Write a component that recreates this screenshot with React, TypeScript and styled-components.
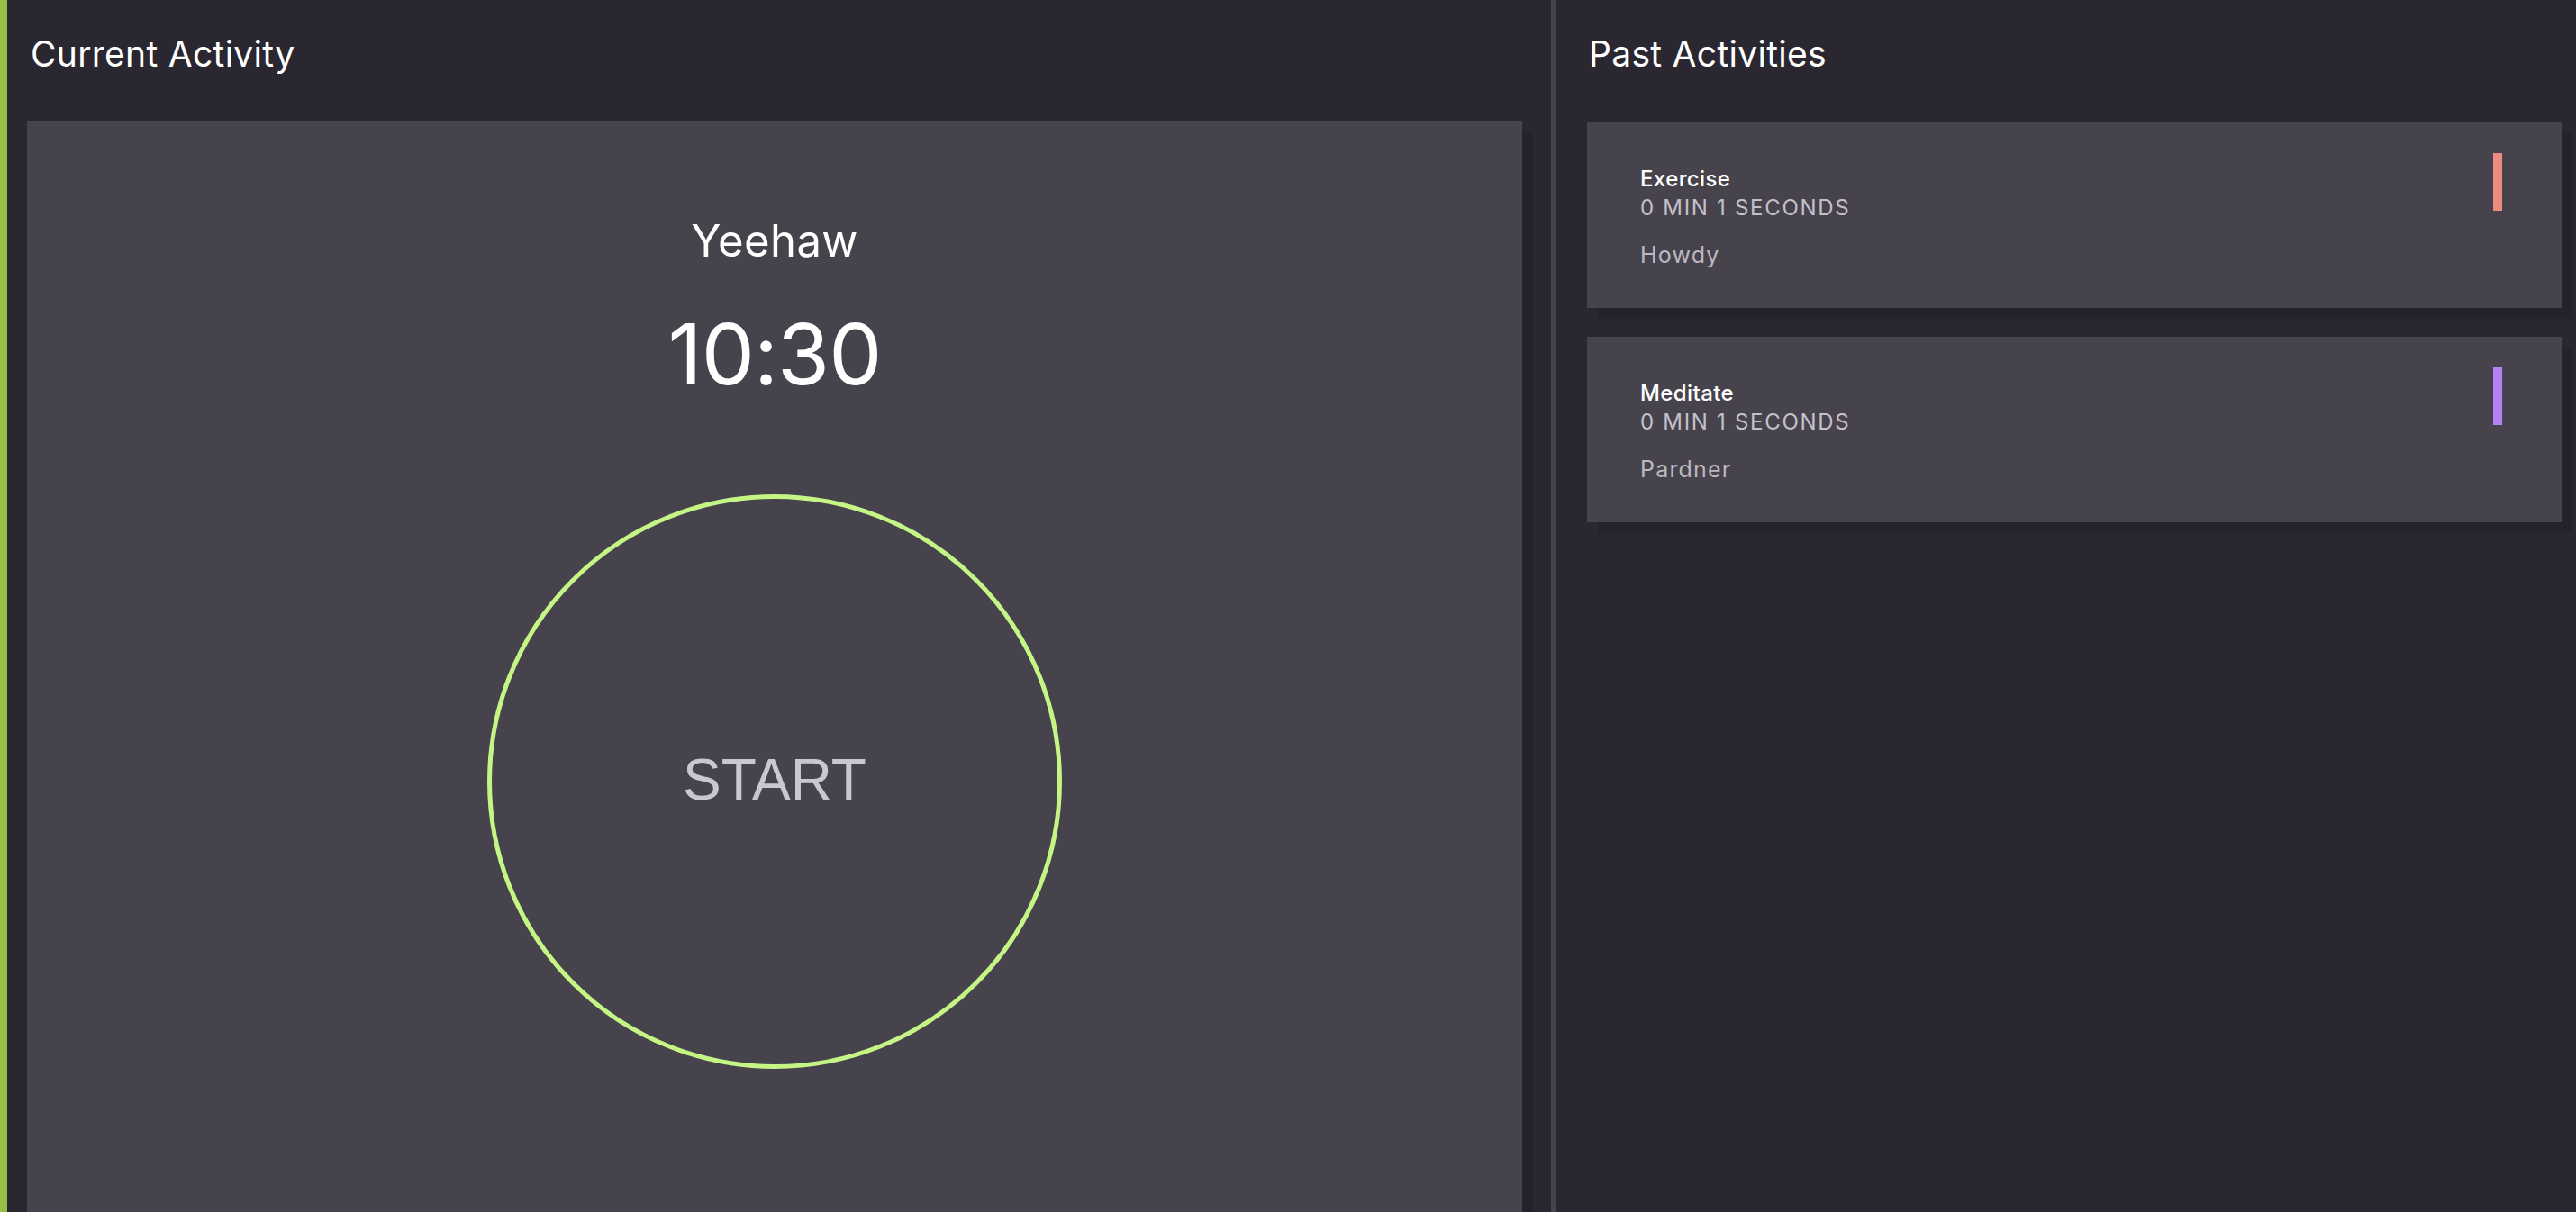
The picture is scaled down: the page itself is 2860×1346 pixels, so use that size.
import styled, { createGlobalStyle } from "styled-components";

const GlobalStyle = createGlobalStyle`
    html, body {
        margin: 0;
        padding: 0;
        background: #2a2731;
        overflow: hidden;
    }

    * {
        box-sizing: border-box;
    }
`;

const Page = styled.div`
    display: flex;
    height: 100vh;
    background: #2a2731;
    font-family: Inter, "Liberation Sans", sans-serif;
    color: #ffffff;
`;

const Panel = styled.section<{ $accent?: boolean }>`
    display: flex;
    flex-direction: column;
    height: 100%;
    border-left: ${(p) => (p.$accent ? "8px solid #97c045" : "none")};
    flex: ${(p) => (p.$accent ? "0 0 1722px" : "1 1 auto")};
    padding: ${(p) => (p.$accent ? "0 32px 0 22px" : "0 16px 0 34px")};
`;

const Divider = styled.div`
    flex: 0 0 6px;
    background: #46434d;
`;

const Heading = styled.h1<{ $indent: number }>`
    margin: 40px 0 55px ${(p) => p.$indent}px;
    font-size: 39px;
    line-height: 1;
    font-weight: 400;
    letter-spacing: 0.3px;
`;

const TimerCard = styled.div`
    flex: 1 1 auto;
    display: flex;
    flex-direction: column;
    align-items: center;
    background: #46434d;
    box-shadow: 12px 12px 0 #25222b;
`;

const ActivityName = styled.h2`
    margin: 109px 0 0;
    font-size: 49px;
    line-height: 1;
    font-weight: 400;
    letter-spacing: 0.4px;
`;

const Clock = styled.div`
    margin-top: 54px;
    font-size: 94px;
    line-height: 1;
    font-weight: 400;
    letter-spacing: -1px;
`;

const StartButton = styled.button`
    margin-top: 109px;
    width: 638px;
    height: 638px;
    border-radius: 50%;
    border: 5px solid #c5f585;
    background: transparent;
    color: #cac7cf;
    font-family: "Liberation Sans", Arial, sans-serif;
    font-size: 64px;
    padding-bottom: 6px;
    cursor: pointer;
`;

const List = styled.div`
    display: flex;
    flex-direction: column;
    gap: 32px;
    margin-top: 2px;
`;

const Entry = styled.div`
    display: flex;
    justify-content: space-between;
    align-items: flex-start;
    height: 206px;
    padding: 34px 66px 0 59px;
    background: #46434d;
    box-shadow: 12px 12px 0 #25222b;
`;

const EntryText = styled.div`
    display: flex;
    flex-direction: column;
    margin-top: 17px;
`;

const EntryTitle = styled.div`
    font-size: 24px;
    line-height: 1;
    font-weight: 500;
    letter-spacing: 0.4px;
    color: #ffffff;
`;

const Duration = styled.div`
    margin-top: 8px;
    font-size: 24px;
    line-height: 1;
    letter-spacing: 1.7px;
    color: #c4c0c9;
`;

const Note = styled.div`
    margin-top: 28px;
    font-size: 25px;
    line-height: 1;
    letter-spacing: 1.2px;
    color: #bcb8c1;
`;

const ColorTag = styled.div<{ $color: string }>`
    width: 10px;
    height: 64px;
    background: ${(p) => p.$color};
`;

const pastActivities = [
    { name: "Exercise", duration: "0 MIN 1 SECONDS", note: "Howdy", color: "#ef8a80" },
    { name: "Meditate", duration: "0 MIN 1 SECONDS", note: "Pardner", color: "#b67ff2" },
];

export default function App() {
    return (
        <>
            <GlobalStyle />
            <Page>
                <Panel $accent>
                    <Heading $indent={4}>Current Activity</Heading>
                    <TimerCard>
                        <ActivityName>Yeehaw</ActivityName>
                        <Clock>10:30</Clock>
                        <StartButton>START</StartButton>
                    </TimerCard>
                </Panel>
                <Divider />
                <Panel>
                    <Heading $indent={2}>Past Activities</Heading>
                    <List>
                        {pastActivities.map((a) => (
                            <Entry key={a.name}>
                                <EntryText>
                                    <EntryTitle>{a.name}</EntryTitle>
                                    <Duration>{a.duration}</Duration>
                                    <Note>{a.note}</Note>
                                </EntryText>
                                <ColorTag $color={a.color} />
                            </Entry>
                        ))}
                    </List>
                </Panel>
            </Page>
        </>
    );
}
